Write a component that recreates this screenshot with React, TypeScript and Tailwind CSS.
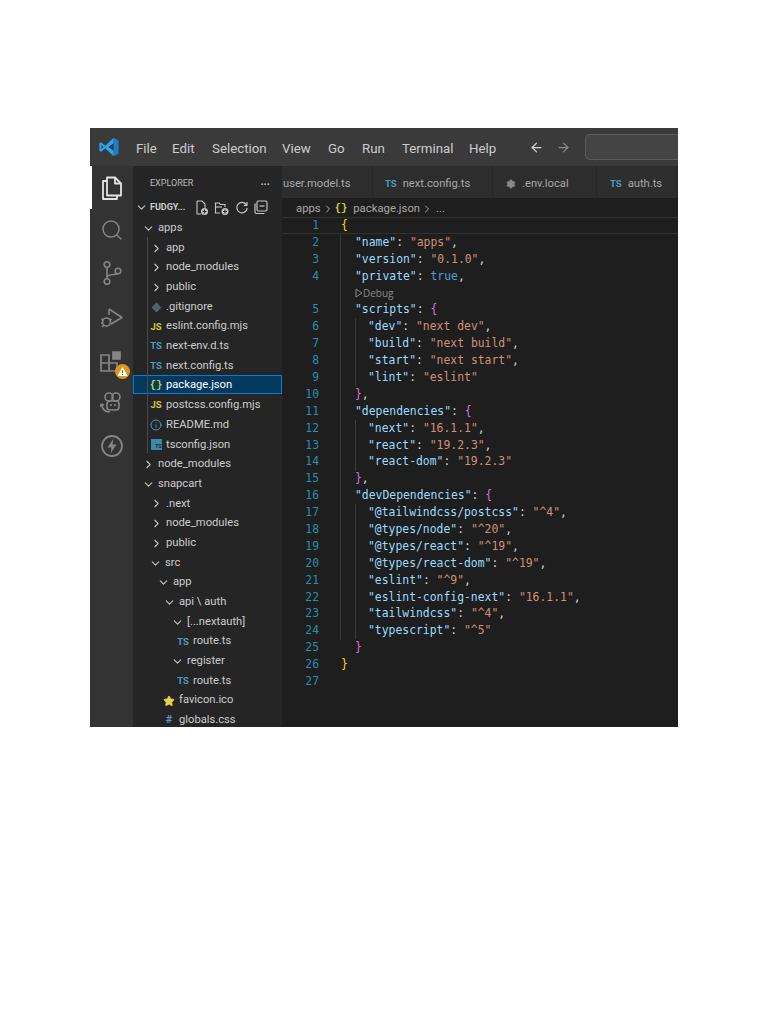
import React from "react";
import { ArrowLeft, ArrowRight, ChevronDown, ChevronRight, Info, Search, Settings, Star } from "lucide-react";

// ícones desenhados à mão (não existem iguais nos pacotes)
const VscodeLogo = () => (
  <svg width="20" height="20" viewBox="0 0 24 24">
    <path d="M17.5 1 L23.5 3.8 V20.2 L17.5 23 Z" fill="#1c7fc4" />
    <path d="M17.5 1 V7.5 L11.2 12 L17.5 16.5 V23 L7.5 13.5 L2.5 17.8 L0.5 16.4 V7.6 L2.5 6.2 L7.5 10.5 Z M2.9 9.5 V14.5 L5.6 12 Z" fill="#2fa4ee" fillRule="evenodd" />
  </svg>
);

const FilesIcon = () => (
  <svg width="24" height="26" viewBox="0 0 24 26" fill="none" stroke="#e4e4e4" strokeWidth="1.8" strokeLinejoin="round">
    <path d="M7 2.5 H15 L21 8.5 V20.5 H7 Z" />
    <path d="M15 2.5 V8.5 H21" />
    <path d="M7 6 H3 V24 H17 V20.5" />
  </svg>
);

const SourceControlIcon = () => (
  <svg width="24" height="26" viewBox="0 0 24 26" fill="none" stroke="#858585" strokeWidth="1.6">
    <circle cx="7" cy="4.5" r="2.8" />
    <circle cx="7" cy="21.5" r="2.8" />
    <circle cx="18" cy="11" r="2.8" />
    <path d="M7 7.5 V18.5 M7 17 C8 14 15.5 15 17.5 13.8" />
  </svg>
);

const RunDebugIcon = () => (
  <svg width="24" height="24" viewBox="0 0 24 24" fill="none" stroke="#858585" strokeWidth="1.6" strokeLinejoin="round">
    <path d="M9 3 L22 11.5 L11 18" />
    <path d="M9 3 V9" />
    <circle cx="6.5" cy="16" r="4" />
    <path d="M1.5 13 L3.5 14.5 M1 17 H2.5 M2 21 L4 19 M11.5 13 L9.5 14.5" />
  </svg>
);

const ExtensionsIcon = () => (
  <div className="relative w-[26px] h-[24px]">
    <svg width="24" height="24" viewBox="0 0 24 24" fill="none" stroke="#858585" strokeWidth="1.7">
      <path d="M2 5 H10 V21 H2 Z M2 13 H18 V21 H10" />
      <path d="M14 2 H21 V9 H14 Z" fill="#858585" />
    </svg>
    <div className="absolute right-[-5px] bottom-[-5px] w-[15px] h-[15px] rounded-full bg-[#d99a1c] flex items-center justify-center">
      <svg width="11" height="11" viewBox="0 0 12 12">
        <path d="M6 1 L11.5 11 H0.5 Z" fill="#fff" />
        <path d="M5.5 4.5 H6.5 V8 H5.5 Z M5.5 8.8 H6.5 V9.8 H5.5 Z" fill="#7a5200" />
      </svg>
    </div>
  </div>
);

const CopilotIcon = () => (
  <svg width="24" height="24" viewBox="0 0 24 24" fill="none" stroke="#858585" strokeWidth="1.6">
    <circle cx="9" cy="7" r="4" />
    <circle cx="16" cy="7" r="4" />
    <rect x="7" y="11" width="12" height="9" rx="3" />
    <path d="M11 14 V16 M15 14 V16" />
    <path d="M1.5 14 C2 19 5 22 10 22 M1.5 14 L0 16.5 M1.5 14 L4 15.5" />
  </svg>
);

const BoltIcon = () => (
  <svg width="24" height="24" viewBox="0 0 24 24" fill="none">
    <circle cx="12" cy="12" r="10" stroke="#858585" strokeWidth="1.8" />
    <path d="M13.5 4.5 L7.5 13.5 H11.5 L10.5 19.5 L16.5 10.5 H12.5 Z" fill="#858585" />
  </svg>
);

const NewFileIcon = () => (
  <svg width="14" height="16" viewBox="0 0 14 16" fill="none" stroke="#c5c5c5" strokeWidth="1.1">
    <path d="M2 1 H7 L10 4 V8 M2 1 V14 H6" />
    <circle cx="9.5" cy="11.5" r="3.5" fill="#c5c5c5" stroke="none" />
    <path d="M9.5 9.5 V13.5 M7.5 11.5 H11.5" stroke="#252526" />
  </svg>
);

const NewFolderIcon = () => (
  <svg width="16" height="16" viewBox="0 0 16 16" fill="none" stroke="#c5c5c5" strokeWidth="1.1">
    <path d="M6 13 H1.5 V3 H5 L6.5 4.5 H11 V7" />
    <path d="M1.5 7 H8" />
    <circle cx="11" cy="11.5" r="3.5" fill="#c5c5c5" stroke="none" />
    <path d="M11 9.5 V13.5 M9 11.5 H13" stroke="#252526" />
  </svg>
);

const RefreshIcon = () => (
  <svg width="14" height="14" viewBox="0 0 14 14" fill="none" stroke="#c5c5c5" strokeWidth="1.2">
    <path d="M11.5 4 A5.2 5.2 0 1 0 12.2 7" />
    <path d="M12 1 V4.3 H8.8" />
  </svg>
);

const CollapseIcon = () => (
  <svg width="14" height="15" viewBox="0 0 14 15" fill="none" stroke="#c5c5c5" strokeWidth="1.2">
    <rect x="3" y="1" width="10" height="10" rx="1.5" />
    <path d="M5.5 6 H10.5" />
    <path d="M1 3.5 V12 A1.5 1.5 0 0 0 2.5 13.5 H10.5" />
  </svg>
);

const LensPlay = () => (
  <svg width="8" height="10" viewBox="0 0 8 10" fill="none" stroke="#8a8a8a" strokeWidth="1">
    <path d="M1 1 L7 5 L1 9 Z" />
  </svg>
);

// ícones de arquivo do explorer
const TsIcon = () => <span className="text-[9.5px] font-bold text-[#519aba]">TS</span>;
const JsIcon = () => <span className="text-[9.5px] font-bold text-[#cbcb41]">JS</span>;
const JsonIcon = () => <span className="text-[10.5px] font-bold text-[#cbcb41] font-['Liberation_Mono',monospace]">{"{}"}</span>;
const InfoIcon = () => <Info size={12} color="#519aba" />;
const TsConfigIcon = () => (
  <span className="w-[11px] h-[11px] bg-[#3f86ad] text-[5px] font-bold text-[#12222c] flex items-end justify-end">TS</span>
);
const GitIcon = () => <span className="w-[7px] h-[7px] rotate-45 bg-[#4f636e]" />;
const StarIcon = () => <Star size={12} color="#e5d54a" fill="#e5d54a" />;
const HashIcon = () => <span className="text-[11px] font-bold text-[#519aba]">#</span>;
const Open = () => <ChevronDown size={13} color="#c5c5c5" />;
const Closed = () => <ChevronRight size={13} color="#c5c5c5" />;

type Row = { label: string; pad: string; icon: React.ReactNode; active?: boolean };

const appsChildren: Row[] = [
  { label: "app", pad: "pl-[13px]", icon: <Closed /> },
  { label: "node_modules", pad: "pl-[13px]", icon: <Closed /> },
  { label: "public", pad: "pl-[13px]", icon: <Closed /> },
  { label: ".gitignore", pad: "pl-[13px]", icon: <GitIcon /> },
  { label: "eslint.config.mjs", pad: "pl-[13px]", icon: <JsIcon /> },
  { label: "next-env.d.ts", pad: "pl-[13px]", icon: <TsIcon /> },
  { label: "next.config.ts", pad: "pl-[13px]", icon: <TsIcon /> },
  { label: "package.json", pad: "pl-[13px]", icon: <JsonIcon />, active: true },
  { label: "postcss.config.mjs", pad: "pl-[13px]", icon: <JsIcon /> },
  { label: "README.md", pad: "pl-[13px]", icon: <InfoIcon /> },
  { label: "tsconfig.json", pad: "pl-[13px]", icon: <TsConfigIcon /> },
];

const restRows: Row[] = [
  { label: "node_modules", pad: "pl-[5px]", icon: <Closed /> },
  { label: "snapcart", pad: "pl-[5px]", icon: <Open /> },
  { label: ".next", pad: "pl-[13px]", icon: <Closed /> },
  { label: "node_modules", pad: "pl-[13px]", icon: <Closed /> },
  { label: "public", pad: "pl-[13px]", icon: <Closed /> },
  { label: "src", pad: "pl-[12px]", icon: <Open /> },
  { label: "app", pad: "pl-[20px]", icon: <Open /> },
  { label: "api \\ auth", pad: "pl-[26px]", icon: <Open /> },
  { label: "[...nextauth]", pad: "pl-[34px]", icon: <Open /> },
  { label: "route.ts", pad: "pl-[40px]", icon: <TsIcon /> },
  { label: "register", pad: "pl-[34px]", icon: <Open /> },
  { label: "route.ts", pad: "pl-[40px]", icon: <TsIcon /> },
  { label: "favicon.ico", pad: "pl-[26px]", icon: <StarIcon /> },
  { label: "globals.css", pad: "pl-[26px]", icon: <HashIcon /> },
];

function TreeRow({ row }: { row: Row }) {
  return (
    <div
      className={`h-[19.7px] shrink-0 pt-[3px] flex items-center text-[11.2px] whitespace-nowrap ${row.pad} ${
        row.active ? "bg-[#04395e] outline outline-1 -outline-offset-1 outline-[#007fd4] text-white" : "text-[#cccccc]"
      }`}
    >
      <span className="w-[20px] shrink-0 flex items-center justify-center">{row.icon}</span>
      {row.label}
    </div>
  );
}

// cores do tema (Dark+ com colorização de colchetes)
const K = "text-[#9cdcfe]";
const S = "text-[#ce9178]";
const B = "text-[#569cd6]";
const P = "text-[#d4d4d4]";
const GOLD = "text-[#ffd700]";
const PINK = "text-[#da70d6]";

type Seg = [string, string];

const kv = (key: string, val: string, comma = true, valColor = S): Seg[] => [
  [`"${key}"`, K],
  [": ", P],
  [val, valColor],
  ...(comma ? ([[",", P]] as Seg[]) : []),
];

const lines: { num?: number; indent: string; segs: Seg[]; lens?: boolean }[] = [
  { num: 1, indent: "pl-0", segs: [["{", GOLD]] },
  { num: 2, indent: "pl-[14px]", segs: kv("name", '"apps"') },
  { num: 3, indent: "pl-[14px]", segs: kv("version", '"0.1.0"') },
  { num: 4, indent: "pl-[14px]", segs: kv("private", "true", true, B) },
  { indent: "pl-[14px]", segs: [], lens: true },
  { num: 5, indent: "pl-[14px]", segs: [['"scripts"', K], [": ", P], ["{", PINK]] },
  { num: 6, indent: "pl-[27px]", segs: kv("dev", '"next dev"') },
  { num: 7, indent: "pl-[27px]", segs: kv("build", '"next build"') },
  { num: 8, indent: "pl-[27px]", segs: kv("start", '"next start"') },
  { num: 9, indent: "pl-[27px]", segs: kv("lint", '"eslint"', false) },
  { num: 10, indent: "pl-[14px]", segs: [["}", PINK], [",", P]] },
  { num: 11, indent: "pl-[14px]", segs: [['"dependencies"', K], [": ", P], ["{", PINK]] },
  { num: 12, indent: "pl-[27px]", segs: kv("next", '"16.1.1"') },
  { num: 13, indent: "pl-[27px]", segs: kv("react", '"19.2.3"') },
  { num: 14, indent: "pl-[27px]", segs: kv("react-dom", '"19.2.3"', false) },
  { num: 15, indent: "pl-[14px]", segs: [["}", PINK], [",", P]] },
  { num: 16, indent: "pl-[14px]", segs: [['"devDependencies"', K], [": ", P], ["{", PINK]] },
  { num: 17, indent: "pl-[27px]", segs: kv("@tailwindcss/postcss", '"^4"') },
  { num: 18, indent: "pl-[27px]", segs: kv("@types/node", '"^20"') },
  { num: 19, indent: "pl-[27px]", segs: kv("@types/react", '"^19"') },
  { num: 20, indent: "pl-[27px]", segs: kv("@types/react-dom", '"^19"') },
  { num: 21, indent: "pl-[27px]", segs: kv("eslint", '"^9"') },
  { num: 22, indent: "pl-[27px]", segs: kv("eslint-config-next", '"16.1.1"') },
  { num: 23, indent: "pl-[27px]", segs: kv("tailwindcss", '"^4"') },
  { num: 24, indent: "pl-[27px]", segs: kv("typescript", '"^5"', false) },
  { num: 25, indent: "pl-[14px]", segs: [["}", PINK]] },
  { num: 26, indent: "pl-0", segs: [["}", GOLD]] },
  { num: 27, indent: "pl-0", segs: [] },
];

function CodeLine({ line }: { line: (typeof lines)[number] }) {
  return (
    <div className={`h-[16.9px] leading-[16.9px] whitespace-pre ${line.indent}`}>
      {line.lens ? (
        <span className="flex items-center h-full text-[10px] text-[#8a8a8a] font-['Open_Sans',sans-serif]">
          <LensPlay />
          Debug
        </span>
      ) : (
        line.segs.map(([text, color], i) => (
          <span key={i} className={color}>
            {text}
          </span>
        ))
      )}
    </div>
  );
}

const menu = [
  { label: "File", w: "w-[36px]" },
  { label: "Edit", w: "w-[40px]" },
  { label: "Selection", w: "w-[70px]" },
  { label: "View", w: "w-[46px]" },
  { label: "Go", w: "w-[34px]" },
  { label: "Run", w: "w-[40px]" },
  { label: "Terminal", w: "w-[67px]" },
  { label: "Help", w: "w-[45px]" },
];

const tabs = [
  { label: "user.model.ts", w: "w-[91px]", pad: "pl-px", icon: null },
  { label: "next.config.ts", w: "w-[120px]", pad: "pl-[12px]", icon: <TsIcon /> },
  { label: ".env.local", w: "w-[104px]", pad: "pl-[13px]", icon: <Settings size={10} color="#8a8a8a" fill="#8a8a8a" /> },
  { label: "auth.ts", w: "w-[81px]", pad: "pl-[13px]", icon: <TsIcon /> },
];

export default function App() {
  return (
    <div className="min-h-[1024px] bg-white pt-[128px] pl-[90px] font-['Roboto',sans-serif]">
      <div className="w-[588px] h-[599px] flex flex-col overflow-hidden bg-[#1e1e1e]">
        {/* barra de título */}
        <div className="h-[38px] shrink-0 bg-[#3a3a3a] flex items-center text-[13.3px] text-[#cccccc] whitespace-nowrap">
          <div className="w-[46px] flex items-center pl-[9px]">
            <VscodeLogo />
          </div>
          {menu.map((m) => (
            <span key={m.label} className={`${m.w} pt-[3px]`}>
              {m.label}
            </span>
          ))}
          <div className="w-[57px] pl-[15px] flex items-center gap-[12px]">
            <ArrowLeft size={15} color="#d0d0d0" />
            <ArrowRight size={15} color="#8a8a8a" />
          </div>
          <div className="ml-[14px] flex-1 h-[26px] bg-[#444444] border border-[#5a5a5a] rounded-l-[5px] border-r-0" />
        </div>

        <div className="flex-1 flex min-h-0">
          {/* barra de atividades */}
          <div className="w-[43px] shrink-0 bg-[#333333] flex flex-col items-center">
            <div className="w-full h-[43px] flex items-center justify-center border-l-2 border-white pr-[2px]">
              <FilesIcon />
            </div>
            <div className="mt-[9px] flex flex-col items-center">
              <Search size={24} color="#858585" strokeWidth={1.5} />
              <div className="mt-[18px]">
                <SourceControlIcon />
              </div>
              <div className="mt-[20px]">
                <RunDebugIcon />
              </div>
              <div className="mt-[20px]">
                <ExtensionsIcon />
              </div>
              <div className="mt-[16px]">
                <CopilotIcon />
              </div>
              <div className="mt-[20px]">
                <BoltIcon />
              </div>
            </div>
          </div>

          {/* explorer */}
          <div className="w-[149px] shrink-0 bg-[#252526] flex flex-col overflow-hidden">
            <div className="h-[32px] shrink-0 flex items-center justify-between pl-[17px] pr-[12px] pt-[3px] text-[9px] text-[#bbbbbb]">
              EXPLORER
              <span className="text-[11px] font-bold leading-none pb-[5px]">...</span>
            </div>
            <div className="h-[19px] shrink-0 flex items-center text-[9px] font-bold text-[#cccccc]">
              <span className="w-[17px] flex justify-center">
                <Open />
              </span>
              <span className="w-[45px]">FUDGY...</span>
              <span className="flex items-center gap-[5px]">
                <NewFileIcon />
                <NewFolderIcon />
                <RefreshIcon />
                <CollapseIcon />
              </span>
            </div>
            <TreeRow row={{ label: "apps", pad: "pl-[5px]", icon: <Open /> }} />
            <div className="relative shrink-0">
              <div className="absolute left-[14px] top-0 bottom-0 w-px bg-[#4a4a4a]" />
              {appsChildren.map((row) => (
                <TreeRow key={row.label} row={row} />
              ))}
            </div>
            {restRows.map((row, i) => (
              <TreeRow key={i} row={row} />
            ))}
          </div>

          {/* área do editor */}
          <div className="flex-1 min-w-0 flex flex-col">
            <div className="h-[32px] shrink-0 flex bg-[#252526] text-[11.2px] text-[#a8a8a8] whitespace-nowrap">
              {tabs.map((t) => (
                <div key={t.label} className={`${t.w} ${t.pad} shrink-0 h-full pt-[4px] bg-[#2d2d2d] border-r border-[#262626] flex items-center gap-[6px]`}>
                  {t.icon}
                  {t.label}
                </div>
              ))}
            </div>
            <div className="h-[19px] shrink-0 bg-[#1e1e1e] pl-[14px] pt-[3px] flex items-center gap-[1px] text-[11.3px] text-[#a9a9a9] whitespace-nowrap">
              apps
              <ChevronRight size={12} color="#a9a9a9" />
              <JsonIcon />
              <span className="ml-[5px]">package.json</span>
              <ChevronRight size={12} color="#a9a9a9" />
              <span className="ml-[2px]">...</span>
            </div>
            <div className="relative flex-1 flex overflow-hidden font-['DejaVu_Sans_Mono',monospace] text-[11.4px]">
              <div className="absolute inset-x-0 top-0 h-[16.9px] border-y border-[#303030]" />
              {/* números de linha */}
              <div className="w-[37px] shrink-0 text-right text-[#2a8db0]">
                {lines.map((line, i) => (
                  <div key={i} className="h-[16.9px] leading-[16.9px]">
                    {line.num}
                  </div>
                ))}
              </div>
              {/* código */}
              <div className="relative ml-[22px] flex-1">
                <div className="absolute -left-px top-[17px] h-[406px] w-px bg-[#3a3a3a]" />
                <div className="absolute left-[14px] top-[101px] h-[68px] w-px bg-[#3a3a3a]" />
                <div className="absolute left-[14px] top-[203px] h-[51px] w-px bg-[#3a3a3a]" />
                <div className="absolute left-[14px] top-[287px] h-[135px] w-px bg-[#3a3a3a]" />
                {lines.map((line, i) => (
                  <CodeLine key={i} line={line} />
                ))}
              </div>
            </div>
          </div>
        </div>
      </div>
    </div>
  );
}
